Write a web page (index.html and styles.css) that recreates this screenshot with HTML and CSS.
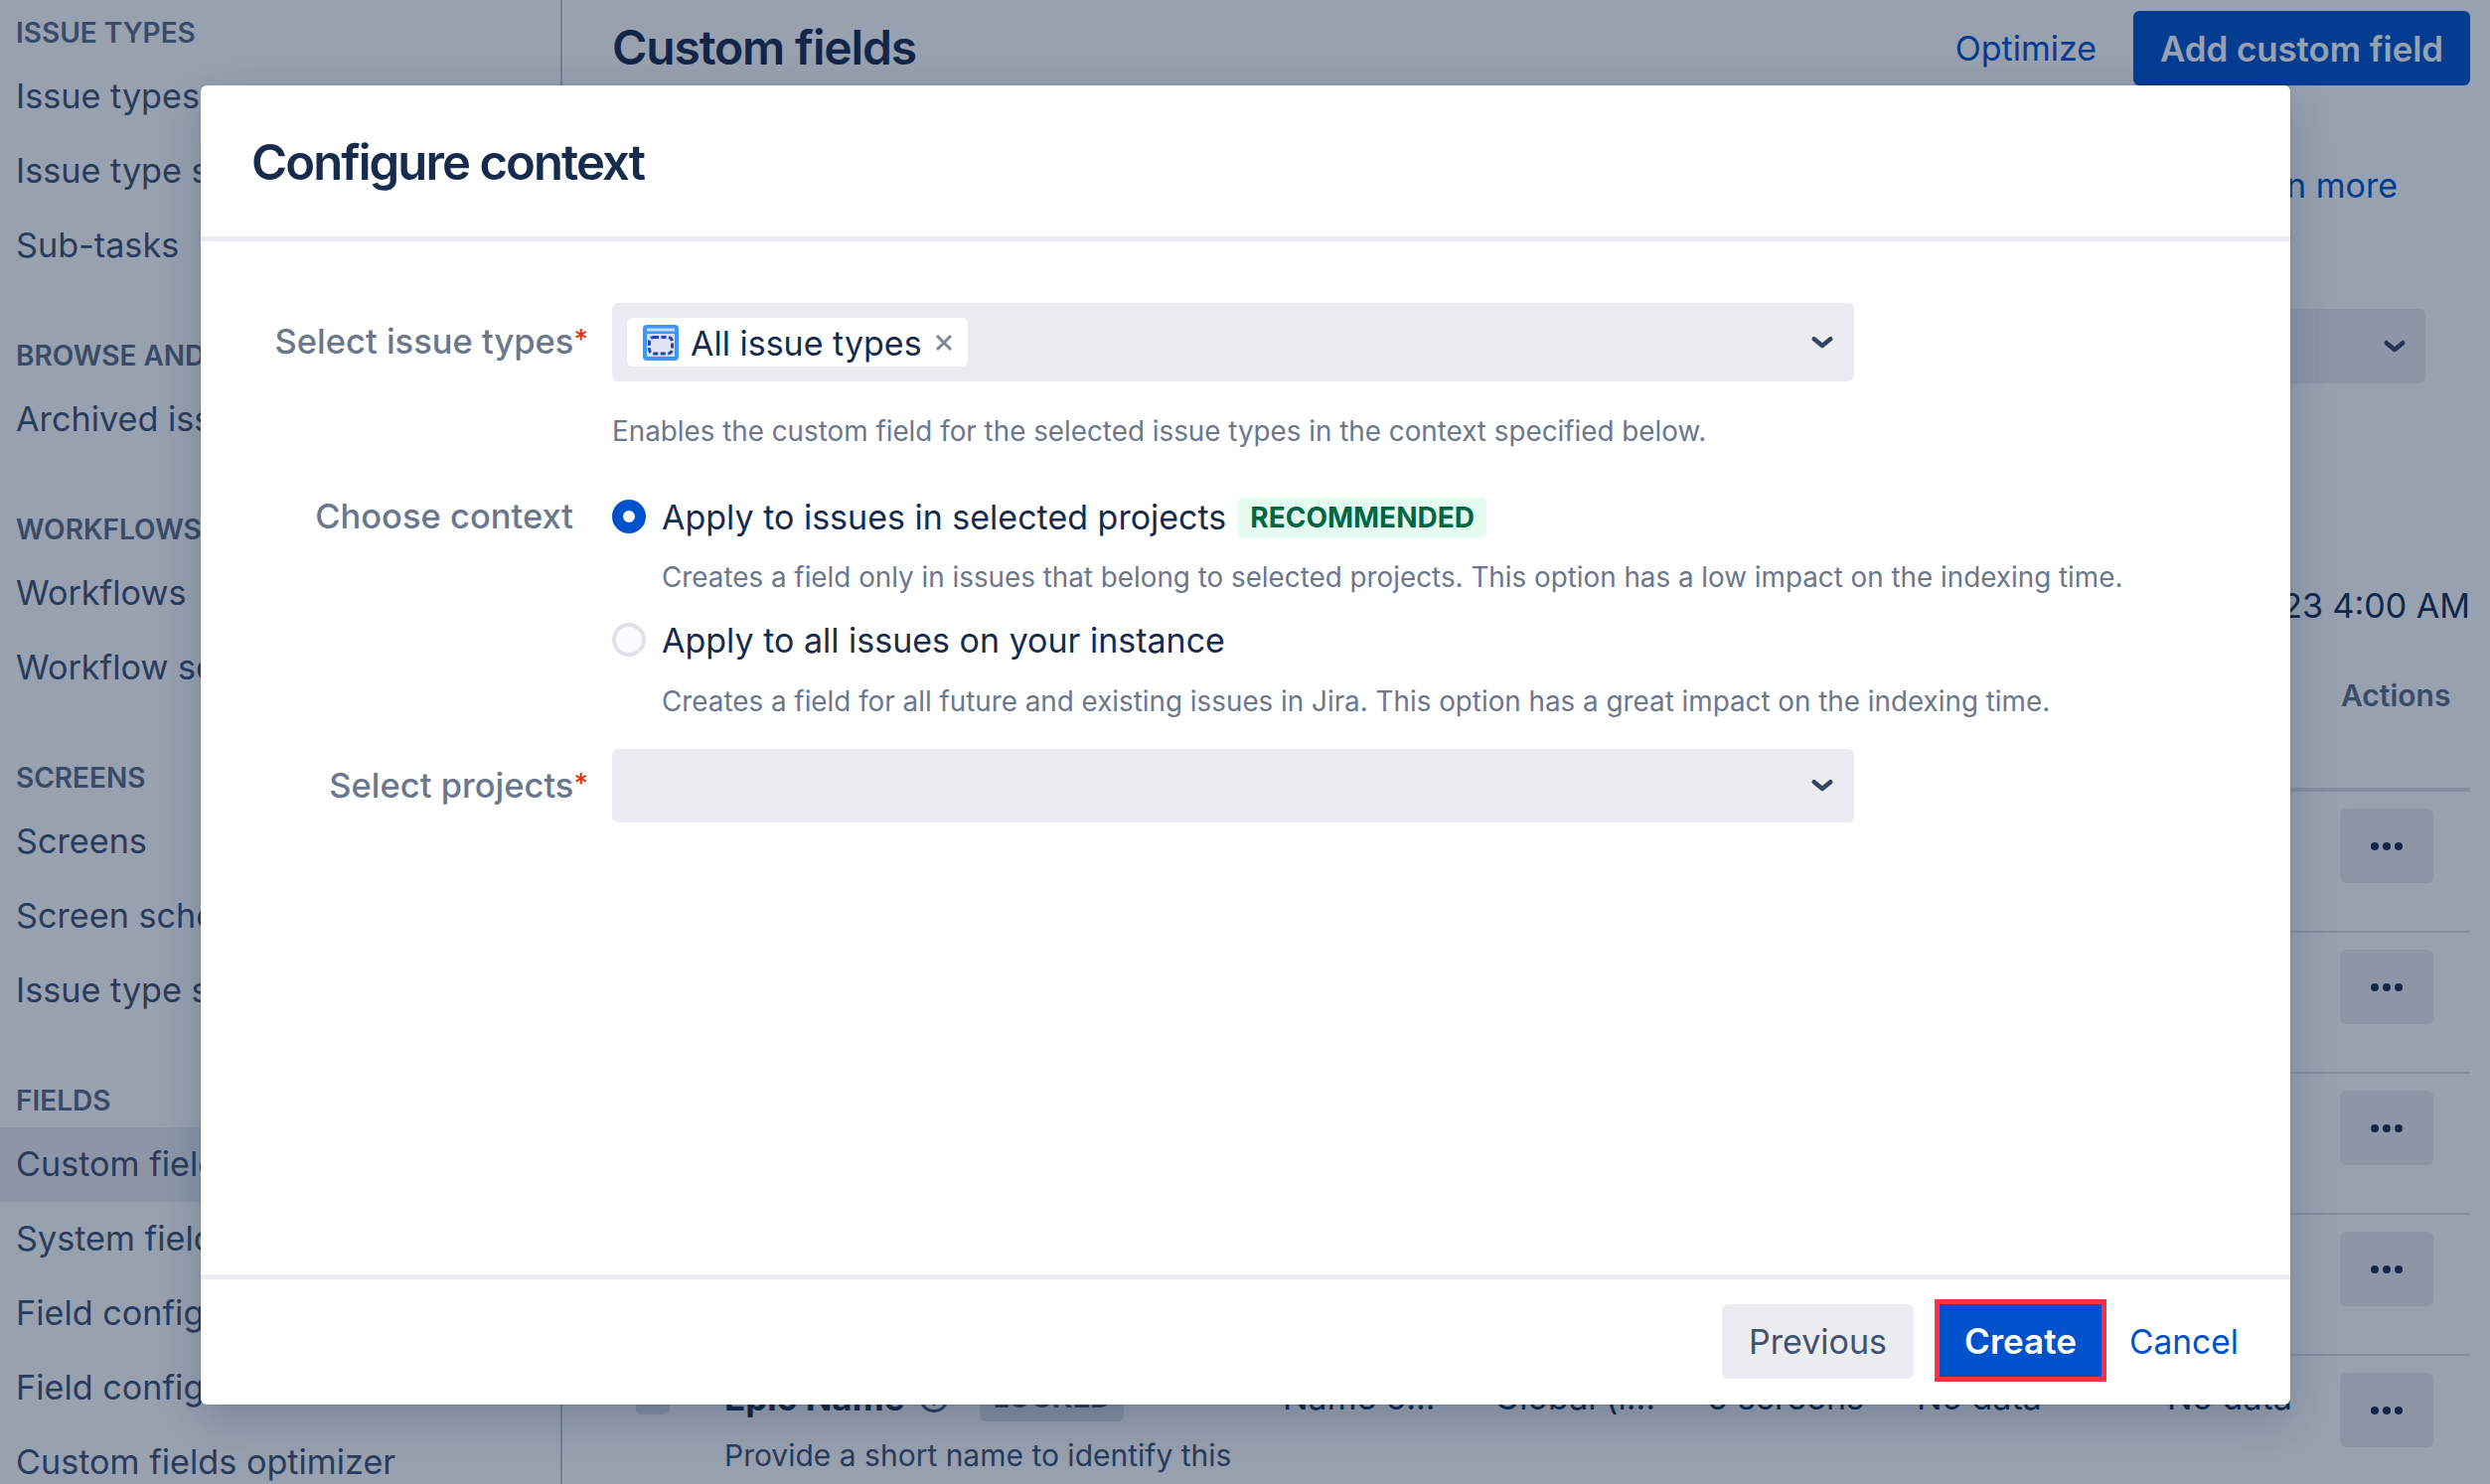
FILE: index.html
```html
<!DOCTYPE html>
<html lang="en">
<head>
<meta charset="utf-8">
<title>Configure context</title>
<link rel="stylesheet" href="styles.css">
</head>
<body>
<div class="page">
  <nav class="sidebar">
    <div class="nav-head">ISSUE TYPES</div>
    <a class="nav-item">Issue types</a>
    <a class="nav-item">Issue type schemes</a>
    <a class="nav-item">Sub-tasks</a>
    <div class="nav-head nav-gap">BROWSE AND RESTORE</div>
    <a class="nav-item">Archived issues</a>
    <div class="nav-head nav-gap">WORKFLOWS</div>
    <a class="nav-item">Workflows</a>
    <a class="nav-item">Workflow schemes</a>
    <div class="nav-head nav-gap">SCREENS</div>
    <a class="nav-item">Screens</a>
    <a class="nav-item">Screen schemes</a>
    <a class="nav-item">Issue type screen schemes</a>
    <div class="nav-head nav-gap">FIELDS</div>
    <a class="nav-item nav-active">Custom fields</a>
    <a class="nav-item">System fields</a>
    <a class="nav-item">Field configurations</a>
    <a class="nav-item">Field configuration schemes</a>
    <a class="nav-item">Custom fields optimizer</a>
  </nav>
  <main class="main">
    <header class="main-head">
      <h1 class="main-title">Custom fields</h1>
      <a class="main-link">Optimize</a>
      <button class="primary-btn">Add custom field</button>
    </header>
    <div class="learn"><a class="main-link">Learn more</a></div>
    <div class="filters">
      <div class="filter-select">
        <svg class="chevron" viewBox="0 0 24 24"><path d="M6.500 9.500l5.500 4.500 5.500-4.500"/></svg>
      </div>
    </div>
    <div class="indexed">2023 4:00 AM</div>
    <div class="table-head"><span class="th-actions">Actions</span></div>
    <div class="row"><span></span><span></span><span></span><span></span><span></span><span></span><span></span><button class="more-btn"><i></i><i></i><i></i></button></div>
    <div class="row"><span></span><span></span><span></span><span></span><span></span><span></span><span></span><button class="more-btn"><i></i><i></i><i></i></button></div>
    <div class="row"><span></span><span></span><span></span><span></span><span></span><span></span><span></span><button class="more-btn"><i></i><i></i><i></i></button></div>
    <div class="row"><span></span><span></span><span></span><span></span><span></span><span></span><span></span><button class="more-btn"><i></i><i></i><i></i></button></div>
    <div class="row">
      <span class="check"></span>
      <div class="name-cell">
        <div class="name-line">
          <strong class="field-name">Epic Name</strong>
          <svg class="help" viewBox="0 0 32 32"><circle cx="16" cy="16" r="13.5"/><path d="M12 12.500a4 4 0 1 1 6 3.500c-1.400.8-2 1.500-2 3"/><circle class="help-dot" cx="16" cy="23" r="1.500"/></svg>
          <span class="locked">LOCKED</span>
        </div>
        <div class="field-desc">Provide a short name to identify this</div>
      </div>
      <span class="cell">Name o...</span>
      <span class="cell">Global (l...</span>
      <span class="cell">6 screens</span>
      <span class="cell">No data</span>
      <span class="cell">No data</span>
      <button class="more-btn"><i></i><i></i><i></i></button>
    </div>
  </main>
</div>

<div class="overlay">
  <section class="modal">
    <header class="modal-head"><h2 class="modal-title">Configure context</h2></header>
    <div class="modal-body">
      <div class="form-row">
        <label class="form-label">Select issue types<span class="req">*</span></label>
        <div class="form-field">
          <div class="select select-tall">
            <span class="tag">
              <svg class="tag-icon" viewBox="0 0 36 36">
                <rect width="36" height="36" rx="4" fill="#3d95ff"/>
                <rect x="4" y="3.500" width="28" height="3" fill="#c4dcff"/>
                <rect x="4" y="9" width="28" height="23" rx="1" fill="#d4e0f7"/>
                <rect x="6.500" y="12.500" width="23" height="16.500" rx="4.500" fill="#e0e5f1" stroke="#2747a5" stroke-width="3" stroke-dasharray="5 2.500"/>
              </svg>
              <span class="tag-text">All issue types</span>
              <svg class="tag-x" viewBox="0 0 18 18"><path d="M2 2l14 14M16 2L2 16"/></svg>
            </span>
            <svg class="chevron" viewBox="0 0 24 24"><path d="M6.500 9.500l5.500 4.500 5.500-4.500"/></svg>
          </div>
          <p class="help-text help-first">Enables the custom field for the selected issue types in the context specified below.</p>
        </div>
      </div>
      <div class="form-row row-context">
        <label class="form-label label-context">Choose context</label>
        <div class="form-field">
          <div class="radio-line">
            <span class="radio radio-on"></span>
            <span class="radio-text">Apply to issues in selected projects</span>
            <span class="lozenge">RECOMMENDED</span>
          </div>
          <p class="help-text radio-help">Creates a field only in issues that belong to selected projects. This option has a low impact on the indexing time.</p>
          <div class="radio-line radio-second">
            <span class="radio"></span>
            <span class="radio-text">Apply to all issues on your instance</span>
          </div>
          <p class="help-text radio-help">Creates a field for all future and existing issues in Jira. This option has a great impact on the indexing time.</p>
        </div>
      </div>
      <div class="form-row row-projects">
        <label class="form-label label-projects">Select projects<span class="req">*</span></label>
        <div class="form-field">
          <div class="select">
            <svg class="chevron" viewBox="0 0 24 24"><path d="M6.500 9.500l5.500 4.500 5.500-4.500"/></svg>
          </div>
        </div>
      </div>
    </div>
    <footer class="modal-foot">
      <button class="btn btn-prev">Previous</button>
      <button class="btn btn-create">Create</button>
      <button class="btn btn-cancel">Cancel</button>
    </footer>
  </section>
</div>
</body>
</html>
```
FILE: styles.css
```css
* { box-sizing: border-box; }
html, body { margin: 0; height: 100%; }
body {
  width: 2506px;
  height: 1494px;
  overflow: hidden;
  position: relative;
  background: #fff;
  color: #172b4d;
  font-family: Inter, "Liberation Sans", sans-serif;
  font-size: 34px;
}
button { font-family: inherit; border: 0; }
h1, h2, p { margin: 0; }

.page { display: flex; height: 1494px; overflow: hidden; }

/* sidebar */
.sidebar { flex: 0 0 566px; padding-top: 7px; border-right: 2px solid #c1c7d0; }
.nav-head { height: 53px; line-height: 53px; padding-left: 16px; font-size: 28px; font-weight: 600; color: #5e6c84; white-space: nowrap; }
.nav-gap { margin-top: 47px; }
.nav-item { display: block; height: 75px; line-height: 73px; padding-left: 16px; font-size: 34.2px; color: #42526e; white-space: nowrap; }
.nav-active { background: #ebecf0; }

/* main */
.main { flex: 1; padding: 11px 20px 0 51px; min-width: 0; }
.main-head { display: flex; align-items: center; height: 75px; }
.main-title { flex: 1; margin: -3px 0 0 -1px; font-size: 48px; font-weight: 600; letter-spacing: -1.15px; }
.main-link { color: #0052cc; }
.primary-btn { height: 75px; width: 339px; margin-left: 37px; background: #0052cc; color: #fff; font-size: 34.8px; font-weight: 600; border-radius: 6px; }
.learn { margin-top: 76px; height: 50px; line-height: 50px; padding-right: 73px; text-align: right; }
.filters { margin-top: 99px; padding-right: 45px; display: flex; justify-content: flex-end; }
.filter-select { display: flex; align-items: center; justify-content: flex-end; width: 500px; height: 75px; padding-right: 13px; background: #ebecf0; border-radius: 6px; }
.indexed { margin-top: 199px; height: 50px; line-height: 50px; text-align: right; }
.table-head { height: 162px; padding-top: 40px; padding-left: 1739px; border-bottom: 4px solid #dfe1e6; }
.th-actions { display: block; line-height: 50px; font-size: 30px; font-weight: 600; color: #5e6c84; }
.row {
  display: grid;
  grid-template-columns: 87px 562px 213px 214px 211px 252px 174px 94px;
  align-items: start;
  height: 142px;
  padding: 17px 0 0 25px;
  border-bottom: 2px solid #dfe1e6;
}
.check { width: 34px; height: 32px; margin: 10px 0 0 -2px; background: #dfe1e6; border-radius: 6px; }
.name-line { display: flex; align-items: center; height: 50px; }
.field-name { font-size: 35px; font-weight: 700; }
.help { width: 32px; height: 32px; margin-left: 14px; fill: none; stroke: #42526e; stroke-width: 3; }
.help-dot { fill: #42526e; stroke: none; }
.locked { margin-left: 30px; padding: 0 13px; height: 48px; line-height: 48px; background: #dfe1e6; color: #42526e; font-size: 29px; font-weight: 700; border-radius: 6px; }
.field-desc { margin-top: 8px; line-height: 50px; font-size: 30px; color: #42526e; white-space: nowrap; }
.cell { line-height: 50px; white-space: nowrap; }
.more-btn { display: flex; align-items: center; justify-content: center; gap: 4px; width: 94px; height: 75px; background: #ebecf0; border-radius: 6px; }
.more-btn i { width: 8px; height: 8px; background: #172b4d; border-radius: 50%; }

/* overlay + modal */
.overlay { position: absolute; inset: 0; display: flex; padding: 86px 201px 80px 202px; background: rgba(9, 30, 66, 0.42); }
.modal { flex: 1; display: flex; flex-direction: column; background: #fff; border-radius: 6px; box-shadow: 0 0 2px rgba(9, 30, 66, 0.2), 0 16px 48px rgba(9, 30, 66, 0.22); }
.modal-head { flex: 0 0 157px; display: flex; align-items: center; padding: 2px 51px 0; border-bottom: 5px solid #ebecf0; }
.modal-title { font-size: 49px; font-weight: 600; letter-spacing: -1.9px; color: #172b4d; }
.modal-body { flex: 1; padding-top: 62px; }
.form-row { display: flex; }
.form-label { flex: 0 0 375px; padding-top: 17px; text-align: right; font-size: 34.5px; font-weight: 500; color: #6b778c; white-space: nowrap; line-height: 44px; }
.label-context { padding-top: 3px; }
.label-projects { padding-top: 15px; }
.form-field { width: 1250px; margin-left: 39px; }
.req { color: #de350b; font-size: 28px; vertical-align: 4px; line-height: 1; margin-right: -15px; }
.select { display: flex; align-items: center; height: 74px; padding: 0 14px 0 15px; background: #ebecf0; border-radius: 6px; }
.select-tall { height: 79px; }
.chevron { width: 36px; height: 36px; margin-left: auto; fill: none; stroke: #344563; stroke-width: 3; stroke-linecap: round; stroke-linejoin: round; }
.tag { display: flex; align-items: center; width: 343px; height: 49px; padding-left: 16px; background: #fff; border-radius: 6px; }
.tag-icon { width: 36px; height: 36px; }
.tag-text { margin-left: 12px; font-size: 34px; padding-top: 2px; }
.tag-x { width: 18px; height: 18px; margin-left: 13px; fill: none; stroke: #7a869a; stroke-width: 3; }
.help-text { font-size: 27.8px; line-height: 40px; color: #6b778c; white-space: nowrap; }
.help-first { margin-top: 30px; }
.row-context { margin-top: 41px; }
.radio-line { display: flex; align-items: center; height: 50px; }
.radio { width: 34px; height: 34px; border-radius: 50%; border: 4px solid #dfe1e6; background: #fafbfc; }
.radio-on { border: 11px solid #0052cc; background: #fff; }
.radio-text { margin-left: 16px; }
.lozenge { margin: 3px 0 0 12px; padding: 0 12px; height: 41px; line-height: 41px; background: #e3fcef; color: #006644; font-size: 28px; font-weight: 700; border-radius: 6px; }
.radio-help { margin-top: 16px; margin-left: 50px; }
.radio-second { margin-top: 18px; }
.radio-second + .radio-help { margin-top: 17px; }
.row-projects { margin-top: 28px; }
.modal-foot { flex: 0 0 131px; display: flex; align-items: flex-start; padding: 25px 0 0 1531px; border-top: 5px solid #ebecf0; }
.btn { height: 75px; font-size: 34px; border-radius: 6px; background: none; }
.btn-prev { width: 193px; background: #ebecf0; color: #42526e; }
.btn-create { width: 163px; margin-left: 26px; height: 73px; background: #0052cc; color: #fff; font-size: 35px; font-weight: 600; border-radius: 0; outline: 5px solid #ff3045; }
.btn-cancel { margin-left: 28px; padding: 0; font-size: 33.5px; color: #0052cc; }
```
